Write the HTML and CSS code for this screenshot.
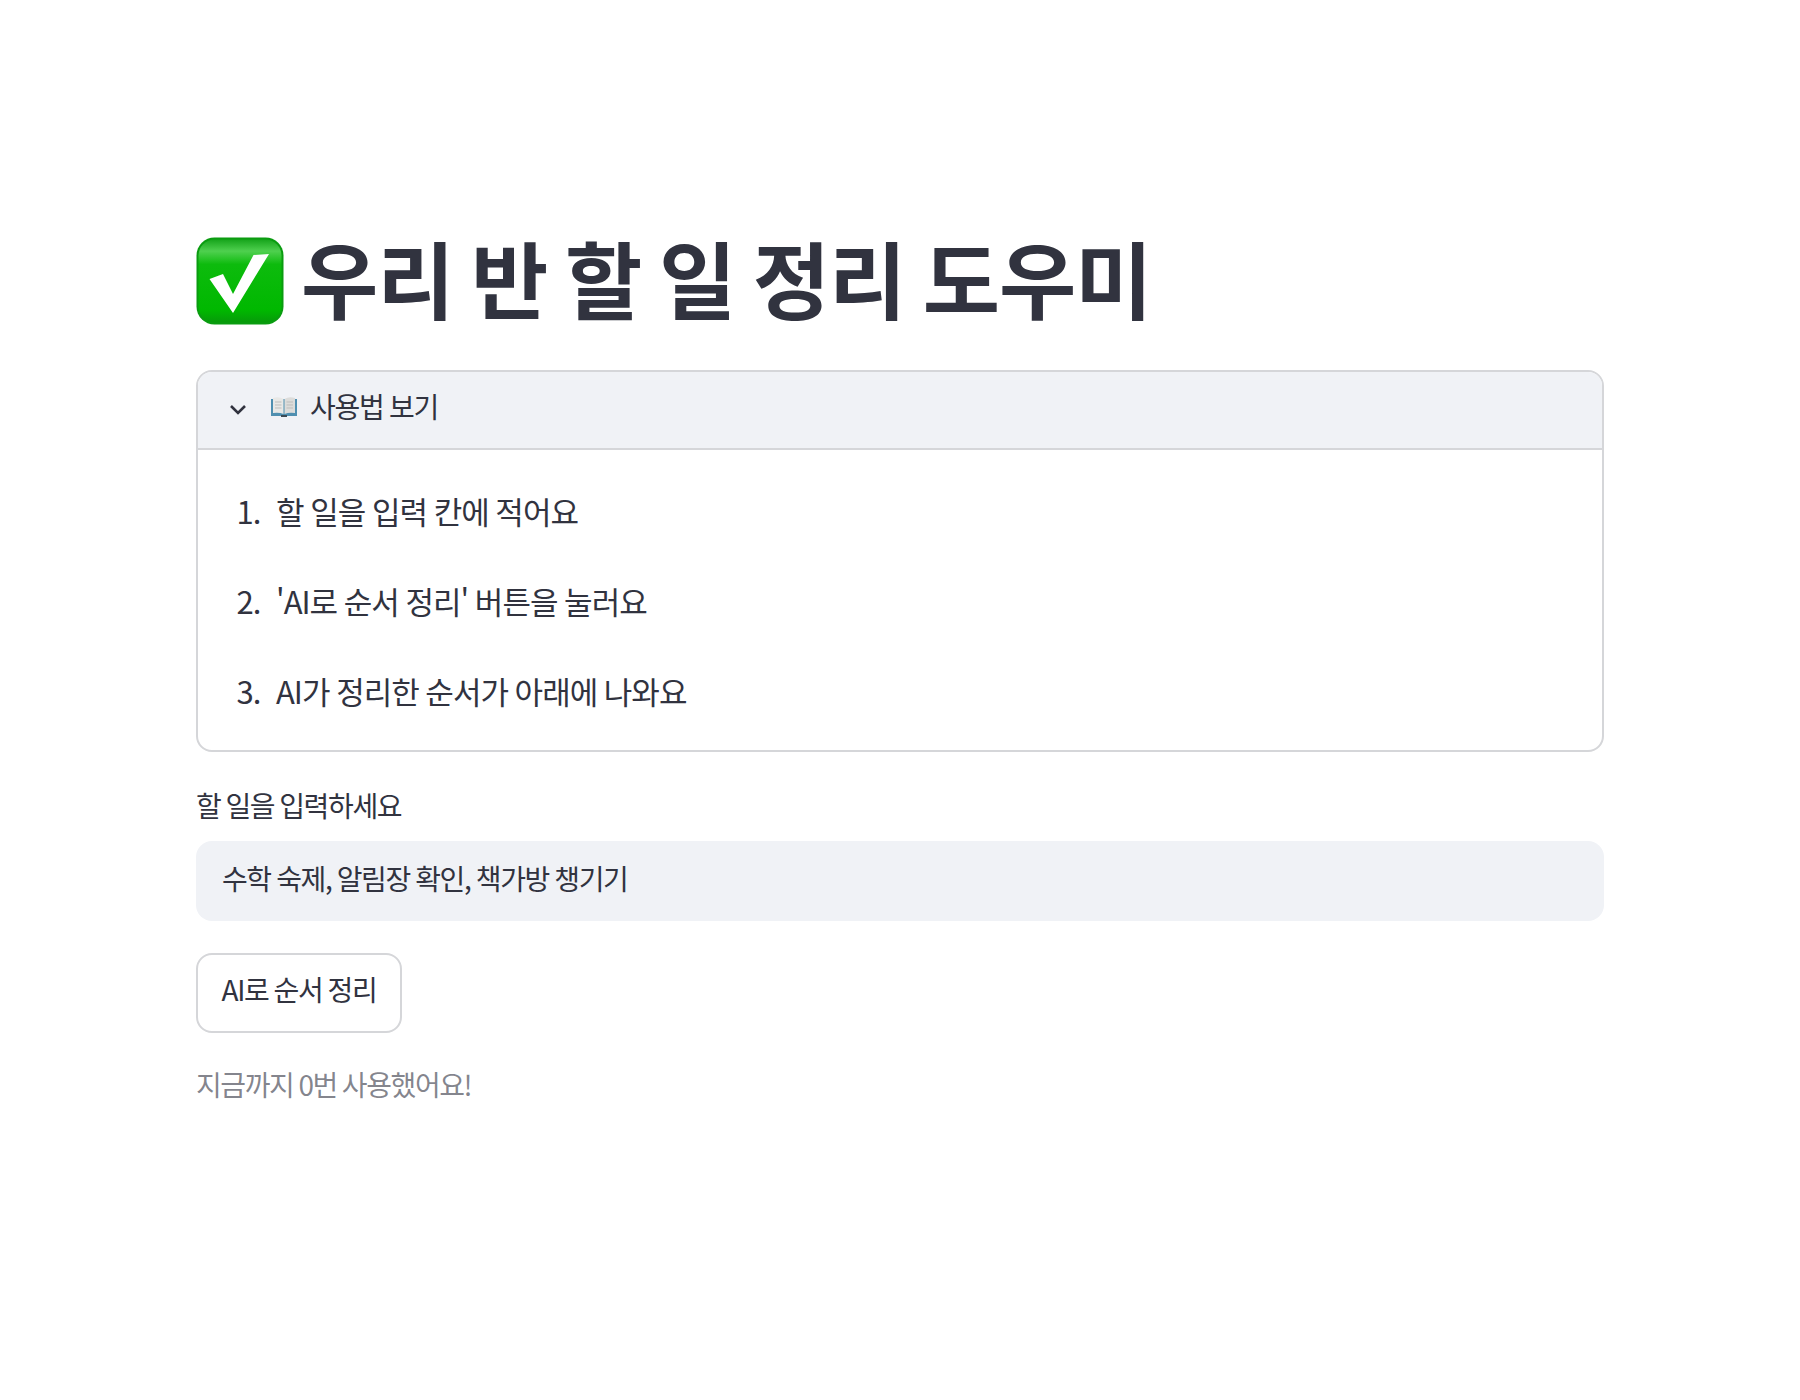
FILE: index.html
```html
<!DOCTYPE html>
<html lang="ko">
<head>
<meta charset="utf-8">
<title>우리 반 할 일 정리 도우미</title>
<link rel="stylesheet" href="styles.css">
</head>
<body>
<main class="app">
  <h1 class="title">
    <svg class="check-emoji" viewBox="0 0 88 88" aria-hidden="true">
      <defs>
        <linearGradient id="g" x1="0" y1="0" x2="0" y2="1">
          <stop offset="0" stop-color="#17a51c"/>
          <stop offset=".14" stop-color="#4fd04f"/>
          <stop offset=".3" stop-color="#0dbb0d"/>
          <stop offset=".85" stop-color="#00b800"/>
          <stop offset="1" stop-color="#079a0a"/>
        </linearGradient>
      </defs>
      <rect x="0.5" y="0.5" width="87" height="87" rx="18" fill="#0a9c10"/>
      <rect x="2.5" y="2.5" width="83" height="83" rx="16" fill="url(#g)"/>
      <path d="M13.5 42 L27 37 L37 57 L57.5 18 L73 17 L37 76 Z" fill="#fff"/>
    </svg>
    <span>우리 반 할 일 정리 도우미</span>
  </h1>

  <section class="expander">
    <header class="expander-head">
      <svg class="chevron" viewBox="0 0 18 11" aria-hidden="true"><path d="M2 2 L9 9 L16 2" fill="none" stroke="#31333f" stroke-width="2.6"/></svg>
      <svg class="book" viewBox="0 0 28 22" aria-hidden="true">
        <path d="M1 3 H27 V20 H1 Z" fill="#4f8fb0"/>
        <path d="M3 2 Q9 0 13.5 3 V18 Q9 16 3 17 Z" fill="#e8e8e6"/>
        <path d="M25 2 Q19 0 14.5 3 V18 Q19 16 25 17 Z" fill="#dcdcda"/>
        <path d="M5 6 H11.5 M5 9 H11.5 M5 12 H11.5 M16.5 6 H23 M16.5 9 H23 M16.5 12 H23" stroke="#bdbdbb" stroke-width="1"/>
        <path d="M11 19 H17 V21 H11 Z" fill="#3b4a55"/>
      </svg>
      <span class="expander-title">사용법 보기</span>
    </header>
    <ol class="steps">
      <li>할 일을 입력 칸에 적어요</li>
      <li>'AI로 순서 정리' 버튼을 눌러요</li>
      <li>AI가 정리한 순서가 아래에 나와요</li>
    </ol>
  </section>

  <label class="field-label" for="todo">할 일을 입력하세요</label>
  <input class="field" id="todo" type="text" value="수학 숙제, 알림장 확인, 책가방 챙기기">

  <button class="action" type="button">AI로 순서 정리</button>

  <p class="caption">지금까지 0번 사용했어요!</p>
</main>
</body>
</html>
```
FILE: styles.css
```css
* { box-sizing: border-box; }
html, body { margin: 0; background: #fff; }
body {
  color: #31333f;
  font-family: "Noto Sans CJK KR", "Noto Sans", sans-serif;
}
.app {
  width: 1408px;
  margin: 0 auto;
  padding-top: 231px;
}
.title {
  display: flex;
  align-items: center;
  gap: 17px;
  height: 100px;
  margin: 0 0 39px;
  font-size: 84px;
  font-weight: 700;
  line-height: 94px;
  letter-spacing: -1.1px;
  word-spacing: -4.7px;
  white-space: nowrap;
}
.title span { margin-bottom: 9px; }
.check-emoji { width: 88px; height: 88px; flex: none; }
.expander {
  border: 2px solid #d5d6d9;
  border-radius: 16px;
  height: 382px;
  overflow: hidden;
}
.expander-head {
  display: flex;
  align-items: center;
  height: 78px;
  padding: 0 0 6px 31px;
  background: #f0f2f6;
  border-bottom: 2px solid #d5d6d9;
  font-size: 28px;
  letter-spacing: -1.3px;
  word-spacing: -1px;
}
.chevron { width: 18px; height: 11px; margin: 4px 23px 0 0; flex: none; }
.book { width: 28px; height: 22px; margin-right: 12px; flex: none; }
.expander-title { margin-bottom: 3px; line-height: 40px; }
.steps {
  margin: 0;
  padding: 37px 0 0 69px;
  font-size: 31px;
  letter-spacing: -1px;
  word-spacing: -1px;
}
.steps li {
  height: 48px;
  padding-left: 9px;
  line-height: 48px;
  margin-bottom: 42px;
}
.field-label {
  display: block;
  margin-top: 33px;
  height: 40px;
  line-height: 40px;
  font-size: 28px;
  letter-spacing: -1.35px;
  word-spacing: -1.5px;
}
.field {
  display: block;
  width: 100%;
  height: 80px;
  margin-top: 16px;
  padding: 0 26px 6px;
  border: 0;
  border-radius: 16px;
  background: #f0f2f6;
  color: #31333f;
  font: inherit;
  font-size: 28px;
  letter-spacing: -1.4px;
  word-spacing: -1px;
}
.action {
  display: block;
  width: 206px;
  height: 80px;
  margin-top: 32px;
  padding: 0 0 8px;
  border: 2px solid #d5d6d9;
  border-radius: 16px;
  background: #fff;
  color: #31333f;
  font: inherit;
  font-size: 28px;
  letter-spacing: -1.3px;
  word-spacing: -1.5px;
}
.caption {
  margin: 31px 0 0;
  line-height: 40px;
  font-size: 28px;
  letter-spacing: -1.4px;
  word-spacing: -1.5px;
  color: rgba(49, 51, 63, .6);
}
```
